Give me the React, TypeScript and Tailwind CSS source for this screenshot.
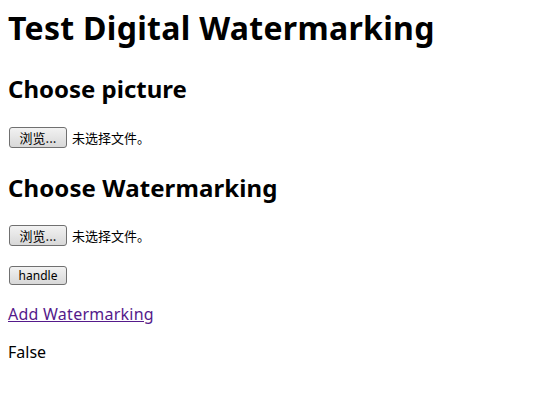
import React from "react";

const font = { fontFamily: '"Noto Sans", "Noto Sans CJK SC", sans-serif' };

function FileRow() {
  return (
    <div className="flex items-center h-[21px]">
      <div className="ml-[1px] w-[58px] h-[21px] flex items-center justify-center rounded-[3px] border border-[#707070] bg-gradient-to-b from-[#f2f2f2] to-[#d8d8d8] text-[13px] text-black leading-none">
        <span className="font-['Noto_Sans_CJK_SC',sans-serif]">浏览...</span>
      </div>
      <span className="ml-[5px] text-[13px] text-black font-['Noto_Sans_CJK_SC',sans-serif]">未选择文件。</span>
    </div>
  );
}

export default function App() {
  return (
    <div className="w-[552px] h-[400px] bg-white px-2 pt-2 flex flex-col text-black" style={font}>
      <h1 className="text-[32px] font-bold leading-[40px] h-[40px] tracking-[0.3px]">Test Digital Watermarking</h1>
      <h2 className="mt-[25px] text-[24px] font-bold leading-[32px] h-[32px]">Choose picture</h2>
      <div className="mt-[22px]"><FileRow /></div>
      <h2 className="mt-[24px] text-[24px] font-bold leading-[32px] h-[32px] tracking-[0.1px]">Choose Watermarking</h2>
      <div className="mt-[21px]"><FileRow /></div>
      <div className="mt-[20px] flex">
        <div className="ml-[1px] w-[58px] h-[19px] flex items-center justify-center rounded-[3px] border border-[#707070] bg-gradient-to-b from-[#f2f2f2] to-[#d8d8d8] text-[12px] leading-none">handle</div>
      </div>
      <a href="#" className="mt-[19px] self-start text-[16px] leading-[20px] text-[#551a8b] underline tracking-[0.25px]">Add Watermarking</a>
      <p className="mt-[18px] text-[16px] leading-[20px]">False</p>
    </div>
  );
}
